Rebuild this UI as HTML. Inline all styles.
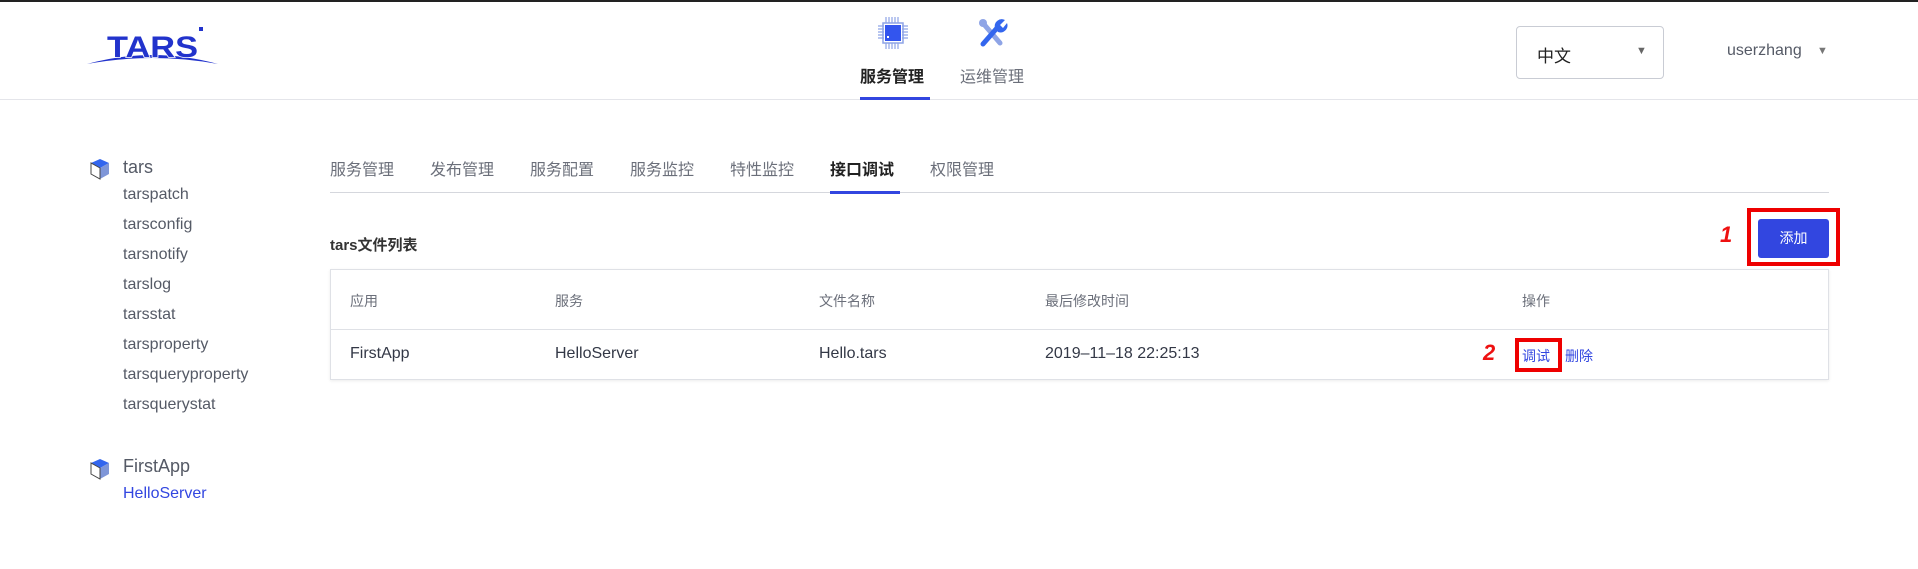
<!DOCTYPE html>
<html><head><meta charset="utf-8"><style>
*{margin:0;padding:0;box-sizing:border-box}
body{width:1918px;height:569px;background:#fff;font-family:"Liberation Sans","Noto Sans CJK SC",sans-serif;position:relative;overflow:hidden;color:#333}
.a{position:absolute;white-space:nowrap}
.side{font-size:16px;color:#555a66;left:123px}
.tab{font-size:16px;color:#6b6f7a;top:156px}
.th{font-size:14px;color:#6b6f7a;top:291px}
.td{font-size:16px;color:#333846;top:345px}
</style></head><body>
<div class="a" style="left:0;top:0;width:1918px;height:2px;background:#222"></div>
<svg class="a" style="left:84px;top:24px" width="140" height="42" viewBox="84 24 140 42">
<path d="M87 64 Q152 46 218 64 Q152 52 87 64Z" fill="#2233cc"/>
<text x="107" y="57" font-family="Liberation Sans" font-weight="bold" font-size="30" fill="#2233cc" textLength="91" lengthAdjust="spacingAndGlyphs" stroke="#fff" stroke-width="1.5" paint-order="stroke">TARS</text>
<rect x="199" y="27" width="4" height="4" fill="#2233cc"/>
</svg>
<div class="a" style="left:0;top:99px;width:1918px;height:1px;background:#e4e5ea"></div>
<svg class="a" style="left:878px;top:17px" width="30" height="32" viewBox="0 0 30 32">
<g stroke="#8ea4e6" stroke-width="1.2"><path d="M8 0v6M11 0v6M14 0v6M17 0v6M20 0v6M8 26v6M11 26v6M14 26v6M17 26v6M20 26v6M0 9h6M0 12h6M0 15h6M0 18h6M0 21h6M24 9h6M24 12h6M24 15h6M24 18h6M24 21h6"/></g>
<rect x="5" y="6" width="20" height="20" fill="none" stroke="#8ea4e6" stroke-width="1.5"/>
<rect x="7" y="8" width="16" height="16" fill="#3355ee"/><rect x="9" y="19" width="2" height="2" fill="#fff"/></svg>
<svg class="a" style="left:978px;top:18px" width="30" height="30" viewBox="0 0 30 30">
<path d="M4 4 L22 25" stroke="#8ea4e6" stroke-width="5" stroke-linecap="round"/>
<circle cx="5" cy="5" r="4" fill="#8ea4e6"/>
<path d="M5 26 L19 10" stroke="#3366ee" stroke-width="5" stroke-linecap="round"/>
<path d="M17 10 A7 7 0 0 1 27 2 L22 7 L25 10 L29 5 A7 7 0 0 1 20 14Z" fill="#3366ee"/></svg>
<div class="a" style="left:860px;top:63px;font-size:16px;font-weight:bold;color:#222">服务管理</div>
<div class="a" style="left:860px;top:97px;width:70px;height:3px;background:#3246e0"></div>
<div class="a" style="left:960px;top:63px;font-size:16px;color:#6b6f7a">运维管理</div>
<div class="a" style="left:1516px;top:26px;width:148px;height:53px;border:1px solid #c9ccd4;border-radius:4px"></div>
<div class="a" style="left:1537px;top:42px;font-size:17px;color:#222">中文</div>
<div class="a" style="left:1636px;top:45px;font-size:11px;color:#666">▼</div>
<div class="a" style="left:1727px;top:42px;font-size:16px;color:#555a66">userzhang</div>
<div class="a" style="left:1817px;top:45px;font-size:11px;color:#777">▼</div>

<svg class="a" style="left:89px;top:158px" width="22" height="22" viewBox="0 0 22 22"><path d="M11 1 L20 5 L11 10 L2 5Z" fill="#3366ee"/><path d="M11 10 L11 21 L20 16 L20 5Z" fill="#7f96d8"/><path d="M2 5 L2 16 L11 21 L11 10Z" fill="#fff" stroke="#444" stroke-width="1"/></svg>
<div class="a side" style="top:157px;font-size:18px">tars</div>
<div class="a side" style="top:186px">tarspatch</div>
<div class="a side" style="top:216px">tarsconfig</div>
<div class="a side" style="top:246px">tarsnotify</div>
<div class="a side" style="top:276px">tarslog</div>
<div class="a side" style="top:306px">tarsstat</div>
<div class="a side" style="top:336px">tarsproperty</div>
<div class="a side" style="top:366px">tarsqueryproperty</div>
<div class="a side" style="top:396px">tarsquerystat</div>
<svg class="a" style="left:89px;top:458px" width="22" height="22" viewBox="0 0 22 22"><path d="M11 1 L20 5 L11 10 L2 5Z" fill="#3366ee"/><path d="M11 10 L11 21 L20 16 L20 5Z" fill="#7f96d8"/><path d="M2 5 L2 16 L11 21 L11 10Z" fill="#fff" stroke="#444" stroke-width="1"/></svg>
<div class="a side" style="top:456px;font-size:18px">FirstApp</div>
<div class="a side" style="top:485px;color:#3246e0">HelloServer</div>

<div class="a tab" style="left:330px">服务管理</div>
<div class="a tab" style="left:430px">发布管理</div>
<div class="a tab" style="left:530px">服务配置</div>
<div class="a tab" style="left:630px">服务监控</div>
<div class="a tab" style="left:730px">特性监控</div>
<div class="a tab" style="left:830px;color:#222;font-weight:bold">接口调试</div>
<div class="a tab" style="left:930px">权限管理</div>
<div class="a" style="left:330px;top:192px;width:1499px;height:1px;background:#d5d7dd"></div>
<div class="a" style="left:830px;top:191px;width:70px;height:3px;background:#3246e0"></div>

<div class="a" style="left:330px;top:234px;font-size:15px;font-weight:bold;color:#333">tars文件列表</div>
<div class="a" style="left:1720px;top:222px;font-size:22px;font-style:italic;font-weight:bold;color:#ee1111">1</div>
<div class="a" style="left:1747px;top:208px;width:93px;height:58px;border:4px solid #ee0000"></div>
<div class="a" style="left:1758px;top:219px;width:71px;height:39px;background:#3246e0;border-radius:3px;color:#fff;font-size:14px;text-align:center;line-height:39px">添加</div>

<div class="a" style="left:330px;top:269px;width:1499px;height:111px;border:1px solid #dfe1e6;box-shadow:0 1px 3px rgba(0,0,0,.08)"></div>
<div class="a" style="left:331px;top:329px;width:1497px;height:1px;background:#dfe1e6"></div>
<div class="a th" style="left:350px">应用</div>
<div class="a th" style="left:555px">服务</div>
<div class="a th" style="left:819px">文件名称</div>
<div class="a th" style="left:1045px">最后修改时间</div>
<div class="a th" style="left:1522px">操作</div>
<div class="a td" style="left:350px">FirstApp</div>
<div class="a td" style="left:555px">HelloServer</div>
<div class="a td" style="left:819px">Hello.tars</div>
<div class="a td" style="left:1045px">2019–11–18 22:25:13</div>
<div class="a" style="left:1483px;top:340px;font-size:22px;font-style:italic;font-weight:bold;color:#ee1111">2</div>
<div class="a" style="left:1515px;top:338px;width:47px;height:34px;border:4px solid #ee0000"></div>
<div class="a" style="left:1522px;top:346px;font-size:14px;color:#3246e0">调试</div>
<div class="a" style="left:1565px;top:346px;font-size:14px;color:#3246e0">删除</div>
</body></html>
